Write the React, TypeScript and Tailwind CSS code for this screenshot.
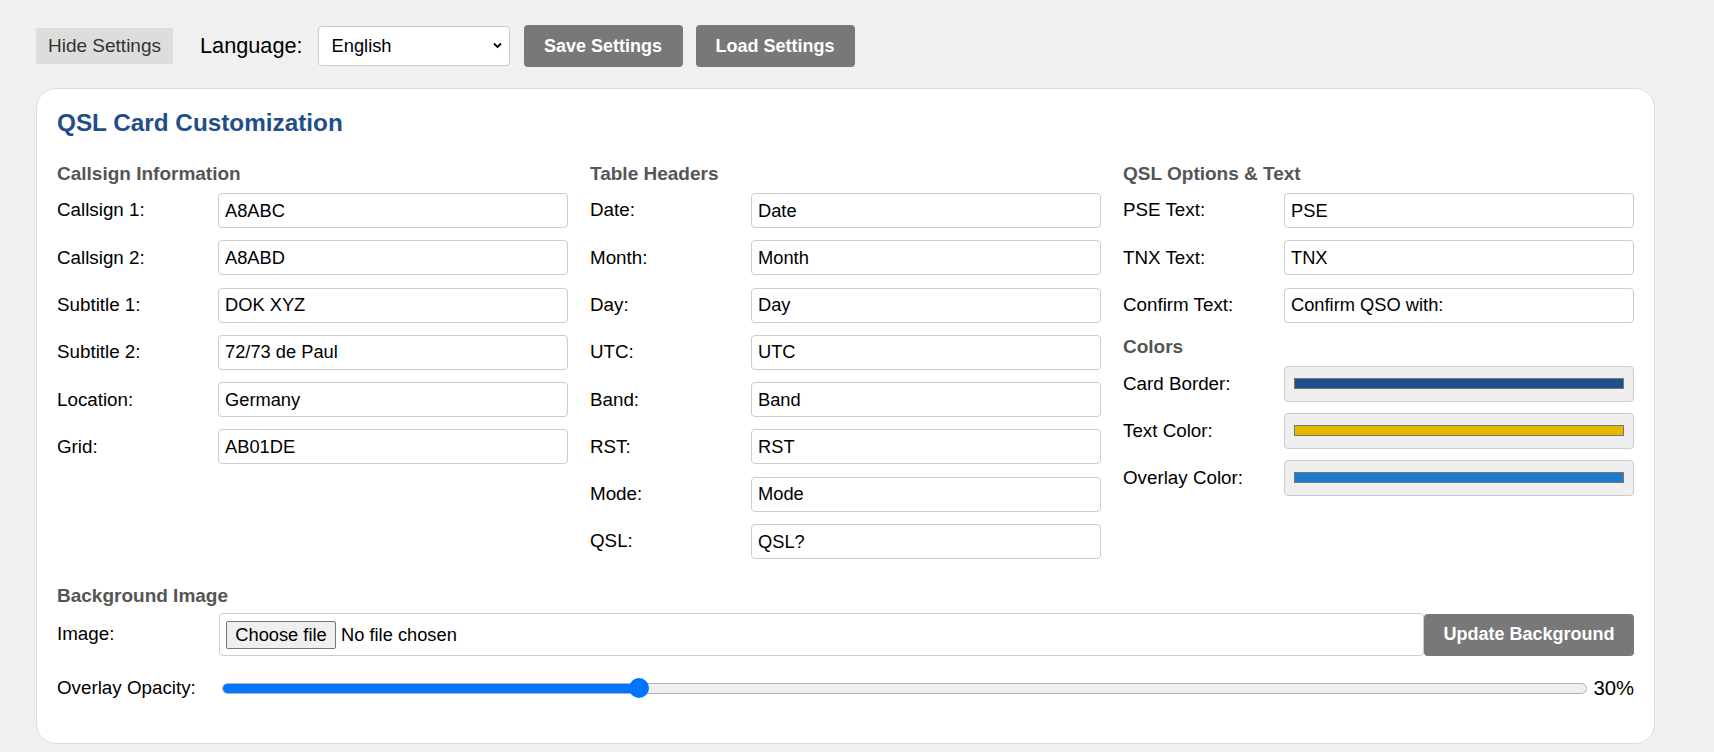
import React from "react";

const callsignRows = [
  ["Callsign 1:", "A8ABC"],
  ["Callsign 2:", "A8ABD"],
  ["Subtitle 1:", "DOK XYZ"],
  ["Subtitle 2:", "72/73 de Paul"],
  ["Location:", "Germany"],
  ["Grid:", "AB01DE"],
];

const headerRows = [
  ["Date:", "Date"],
  ["Month:", "Month"],
  ["Day:", "Day"],
  ["UTC:", "UTC"],
  ["Band:", "Band"],
  ["RST:", "RST"],
  ["Mode:", "Mode"],
  ["QSL:", "QSL?"],
];

const optionRows = [
  ["PSE Text:", "PSE"],
  ["TNX Text:", "TNX"],
  ["Confirm Text:", "Confirm QSO with:"],
];

const colorRows = [
  ["Card Border:", "bg-[#1f4e8a]"],
  ["Text Color:", "bg-[#e6b800]"],
  ["Overlay Color:", "bg-[#1e7bcb]"],
];

const SectionTitle = ({ children }: { children: React.ReactNode }) => (
  <h3 className="h-[22px] leading-[22px] text-[19px] font-bold text-[#555]">{children}</h3>
);

const TextRow = ({ label, value }: { label: string; value: string }) => (
  <div className="flex items-center h-[35px]">
    <label className="w-[161px] shrink-0 text-[18.8px] text-black">{label}</label>
    <input
      defaultValue={value}
      className="flex-1 min-w-0 h-[35px] px-[6px] border border-[#ccc] rounded-[4px] bg-white text-[18.3px] text-black outline-none"
    />
  </div>
);

const ColorRow = ({ label, swatch }: { label: string; swatch: string }) => (
  <div className="flex items-center h-[36px]">
    <label className="w-[161px] shrink-0 text-[18.8px] text-black">{label}</label>
    <div className="flex-1 h-[36px] border border-[#ccc] rounded-[4px] bg-[#efefef] flex items-center px-[9px]">
      <div className={`w-full h-[11px] border border-[#777] ${swatch}`} />
    </div>
  </div>
);

const Slider = ({ value }: { value: number }) => (
  <div className="relative flex-1 mx-[2px] h-[22px] flex items-center">
    <div className="w-full h-[11px] rounded-full border border-[#b2b2b2] bg-[#efefef] overflow-hidden">
      <div className="h-full bg-[#0075ff]" style={{ width: `calc(${value}% - ${value * 0.2 - 13}px)` }} />
    </div>
    <div
      className="absolute top-[1px] w-[20px] h-[20px] rounded-full bg-[#0075ff]"
      style={{ left: `calc(${value}% - ${value * 0.2 - 3}px)` }}
    />
  </div>
);

export default function App() {
  return (
    <div className="min-h-screen bg-[#f0f0f0] px-[36px] pt-[25px] pb-[10px] font-['Liberation_Sans',Arial,sans-serif] text-black">
      <div className="flex items-center h-[42px]">
        <button className="h-[36px] px-[12px] rounded-[3px] bg-[#ddd] text-[19px] text-[#333]">
          Hide Settings
        </button>
        <span className="ml-[27px] text-[21.7px]">Language:</span>
        <div className="relative ml-[15px] w-[192px] h-[40px]">
          <select className="appearance-none w-full h-full pl-[13px] border border-[#ccc] rounded-[4px] bg-white text-[18.3px] outline-none">
            <option>English</option>
          </select>
          <svg className="absolute right-[8px] top-[16px] pointer-events-none" width="9" height="7" viewBox="0 0 9 7">
            <path d="M1 1.5 L4.5 5 L8 1.5" fill="none" stroke="#000" strokeWidth="1.8" />
          </svg>
        </div>
        <button className="ml-[14px] w-[159px] h-[42px] rounded-[4px] bg-[#787878] text-white text-[18px] font-bold">
          Save Settings
        </button>
        <button className="ml-[13px] w-[159px] h-[42px] rounded-[4px] bg-[#787878] text-white text-[18px] font-bold">
          Load Settings
        </button>
      </div>

      <div className="mt-[21px] w-[1619px] bg-white border border-[#ddd] rounded-[20px] px-[20px] pt-[20px] pb-[39px]">
        <h2 className="h-[28px] leading-[28px] text-[24.3px] font-bold text-[#1f4e89]">QSL Card Customization</h2>

        <div className="mt-[26px] grid grid-cols-3 gap-x-[22px] items-start">
          <div className="flex flex-col">
            <SectionTitle>Callsign Information</SectionTitle>
            <div className="mt-[8px] flex flex-col gap-[12.3px]">
              {callsignRows.map(([l, v]) => (
                <TextRow key={l} label={l} value={v} />
              ))}
            </div>
          </div>
          <div className="flex flex-col">
            <SectionTitle>Table Headers</SectionTitle>
            <div className="mt-[8px] flex flex-col gap-[12.3px]">
              {headerRows.map(([l, v]) => (
                <TextRow key={l} label={l} value={v} />
              ))}
            </div>
          </div>
          <div className="flex flex-col">
            <SectionTitle>QSL Options &amp; Text</SectionTitle>
            <div className="mt-[8px] flex flex-col gap-[12.3px]">
              {optionRows.map(([l, v]) => (
                <TextRow key={l} label={l} value={v} />
              ))}
            </div>
            <div className="mt-[13px]">
              <SectionTitle>Colors</SectionTitle>
            </div>
            <div className="mt-[8px] flex flex-col gap-[11px]">
              {colorRows.map(([l, c]) => (
                <ColorRow key={l} label={l} swatch={c} />
              ))}
            </div>
          </div>
        </div>

        <div className="mt-[26px]">
          <SectionTitle>Background Image</SectionTitle>
        </div>
        <div className="mt-[6px] flex items-center">
          <label className="w-[162px] shrink-0 text-[18.8px]">Image:</label>
          <div className="flex-1 h-[43px] border border-[#ccc] rounded-[4px] flex items-center pl-[6px]">
            <span className="h-[28px] w-[110px] flex items-center justify-center border border-[#767676] rounded-[2px] bg-[#efefef] text-[18.3px]">
              Choose file
            </span>
            <span className="ml-[5px] text-[18.3px]">No file chosen</span>
          </div>
          <button className="w-[210px] h-[42px] rounded-[4px] bg-[#787878] text-white text-[18px] font-bold">
            Update Background
          </button>
        </div>

        <div className="mt-[17px] flex items-center">
          <label className="w-[163px] shrink-0 text-[18.8px]">Overlay Opacity:</label>
          <Slider value={30} />
          <span className="ml-[4px] text-[20.3px]">30%</span>
        </div>
      </div>
    </div>
  );
}
